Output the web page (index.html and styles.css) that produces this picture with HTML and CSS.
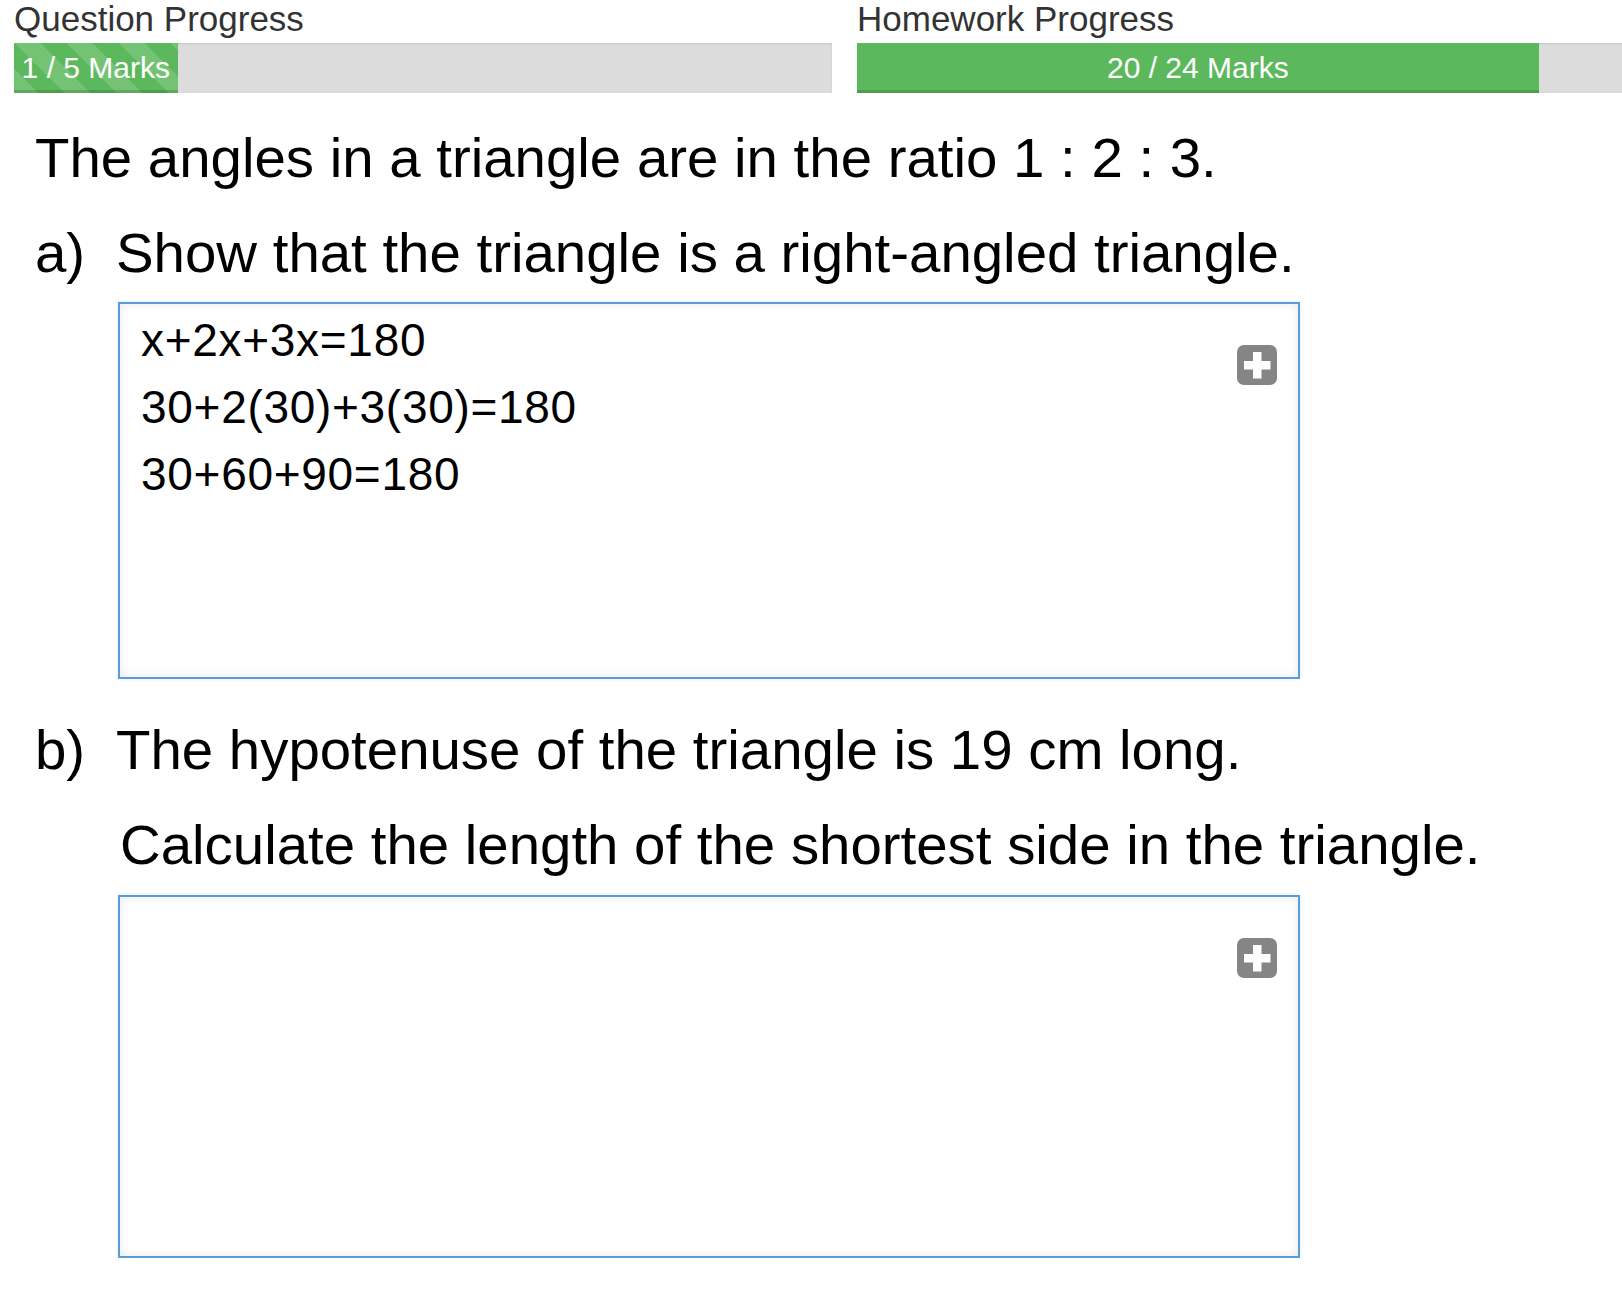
FILE: index.html
```html
<!DOCTYPE html>
<html lang="en">
<head>
<meta charset="utf-8">
<title>Question</title>
<link rel="stylesheet" href="styles.css">
</head>
<body>
<div class="progress-row">
  <div class="progress-col">
    <div class="progress-label">Question Progress</div>
    <div class="progress">
      <div class="progress-bar striped" style="width: 20%">1 / 5 Marks</div>
    </div>
  </div>
  <div class="progress-col">
    <div class="progress-label">Homework Progress</div>
    <div class="progress">
      <div class="progress-bar" style="width: 83.333%">20 / 24 Marks</div>
    </div>
  </div>
</div>

<div class="question">
  <p class="stem">The angles in a triangle are in the ratio 1 : 2 : 3.</p>

  <div class="part">
    <div class="part-title"><span class="part-label">a)</span><span>Show that the triangle is a right-angled triangle.</span></div>
    <div class="answer answer-a">
      <div class="answer-text">
        <div>x+2x+3x=180</div>
        <div>30+2(30)+3(30)=180</div>
        <div>30+60+90=180</div>
      </div>
      <span class="add-btn" aria-label="add">
        <svg viewBox="0 0 40 40" width="40" height="40"><rect x="0" y="0" width="40" height="40" rx="7" ry="7" fill="#858585"/><rect x="16" y="7" width="8.5" height="26.5" fill="#fff"/><rect x="7" y="16" width="26.5" height="8.5" fill="#fff"/></svg>
      </span>
    </div>
  </div>

  <div class="part part-b">
    <div class="part-title"><span class="part-label">b)</span><span>The hypotenuse of the triangle is 19 cm long.</span></div>
    <p class="part-sub">Calculate the length of the shortest side in the triangle.</p>
    <div class="answer answer-b">
      <span class="add-btn" aria-label="add">
        <svg viewBox="0 0 40 40" width="40" height="40"><rect x="0" y="0" width="40" height="40" rx="7" ry="7" fill="#858585"/><rect x="16" y="7" width="8.5" height="26.5" fill="#fff"/><rect x="7" y="16" width="26.5" height="8.5" fill="#fff"/></svg>
      </span>
    </div>
  </div>
</div>
</body>
</html>
```

FILE: styles.css
```css
html, body {
  margin: 0;
  padding: 0;
  overflow: hidden;
  background: #ffffff;
}

body {
  font-family: "Liberation Sans", Arial, Helvetica, sans-serif;
  color: #000;
}

.progress-row {
  display: flex;
  gap: 25px;
  padding-left: 14px;
}

.progress-col {
  flex: 0 0 818px;
  width: 818px;
}

.progress-label {
  font-size: 35px;
  line-height: 38px;
  color: #333;
}

.progress {
  margin-top: 5px;
  height: 50px;
  background: #dcdcdc;
  box-shadow: inset 0 1px 2px rgba(0, 0, 0, 0.1);
  overflow: hidden;
}

.progress-bar {
  height: 50px;
  background-color: #5cb85c;
  color: #fff;
  font-size: 30px;
  line-height: 50px;
  text-align: center;
  white-space: nowrap;
  box-shadow: inset 0 -3px 0 rgba(0, 0, 0, 0.15);
}

.progress-bar.striped {
  background-image: linear-gradient(45deg,
    rgba(255, 255, 255, 0.15) 25%, transparent 25%,
    transparent 50%, rgba(255, 255, 255, 0.15) 50%,
    rgba(255, 255, 255, 0.15) 75%, transparent 75%, transparent);
  background-size: 52px 52px;
}

.question {
  margin-top: 33px;
  font-size: 56.4px;
  line-height: 64px;
}

.stem {
  margin: 0;
  padding-left: 35px;
}

.part {
  margin-top: 31px;
  padding-left: 35px;
}

.part-b {
  margin-top: 39px;
}

.part-title {
  display: flex;
}

.part-label {
  flex: 0 0 81px;
}

.part-sub {
  margin: 31px 0 0 85px;
}

.answer {
  position: relative;
  box-sizing: border-box;
  width: 1182px;
  margin-left: 83px;
  border: 2px solid #5b9dd9;
  background: #fff;
  box-shadow: inset 0 0 10px rgba(0, 0, 0, 0.09), 0 0 3px rgba(102, 175, 233, 0.25);
}

.answer-a {
  margin-top: 17px;
  height: 377px;
}

.answer-b {
  margin-top: 18px;
  height: 363px;
}

.answer-text {
  padding: 3px 0 0 21px;
  font-size: 46px;
  line-height: 67px;
  letter-spacing: 0.7px;
  color: #000;
}

.add-btn {
  position: absolute;
  top: 41px;
  right: 21px;
  width: 40px;
  height: 40px;
  display: block;
}

.add-btn svg {
  display: block;
}
```
